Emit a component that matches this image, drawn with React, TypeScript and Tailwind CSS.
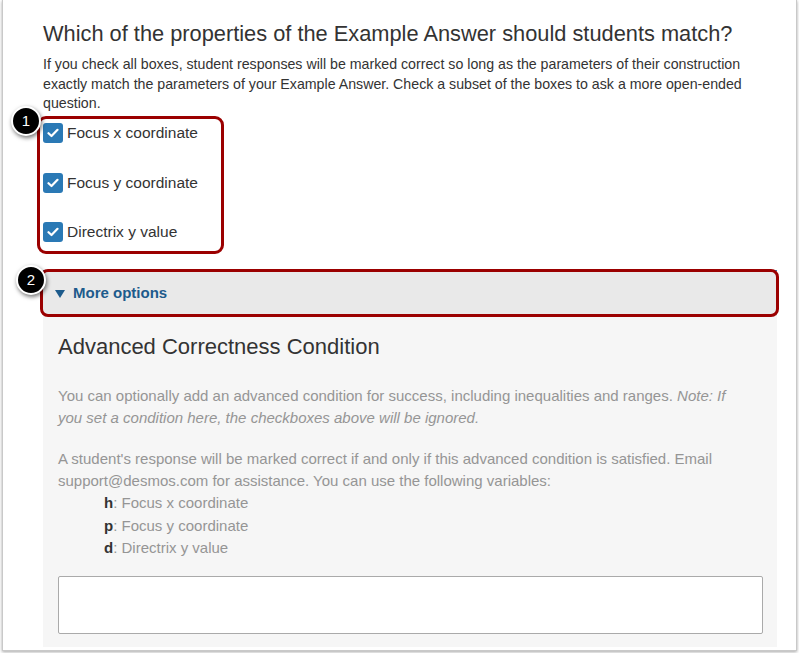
import type { ReactNode } from "react";

const font = { fontFamily: '"Helvetica Neue", "Liberation Sans", Arial, sans-serif' };

function Callout({ n, className }: { n: number; className: string }) {
  return (
    <div
      className={`absolute flex h-[30px] w-[30px] items-center justify-center rounded-full border-2 border-white bg-black text-[15px] text-white shadow-[1px_2px_4px_rgba(0,0,0,0.55)] ${className}`}
    >
      {n}
    </div>
  );
}

function CheckRow({ children }: { children: ReactNode }) {
  return (
    <label className="flex h-[20px] items-center gap-[4px]">
      <span className="flex h-[20px] w-[20px] items-center justify-center rounded-[3px] bg-[#2a79b5]">
        <svg width="12" height="10" viewBox="0 0 12 10" fill="none">
          <path d="M1.5 5.2 4.5 8 10.5 1.8" stroke="white" strokeWidth="2.2" strokeLinecap="round" strokeLinejoin="round" />
        </svg>
      </span>
      <span className="text-[15.5px] text-[#333]">{children}</span>
    </label>
  );
}

function Variable({ name, children }: { name: string; children: ReactNode }) {
  return (
    <div className="h-[22.5px] leading-[22.5px]">
      <b className="font-bold text-[#333]">{name}</b>: {children}
    </div>
  );
}

export default function App() {
  return (
    <div className="h-[653px] w-[799px] overflow-hidden bg-white" style={font}>
      <div className="relative ml-[2px] h-[651px] w-[795px] border-x border-b border-[#c9c9c9] bg-white pl-[40px] pr-[18px] shadow-[0_1px_3px_rgba(0,0,0,0.35)]">
        <h2 className="pt-[20px] text-[21.8px] leading-[28px] text-[#333]">
          Which of the properties of the Example Answer should students match?
        </h2>
        <p className="mt-[7px] text-[14.2px] leading-[19.7px] text-[#333]">
          If you check all boxes, student responses will be marked correct so long as the parameters of their construction
          <br />
          exactly match the parameters of your Example Answer. Check a subset of the boxes to ask a more open-ended
          <br />
          question.
        </p>

        <div className="relative mt-[9px] flex w-[175px] flex-col gap-[29.5px]">
          <CheckRow>Focus x coordinate</CheckRow>
          <CheckRow>Focus y coordinate</CheckRow>
          <CheckRow>Directrix y value</CheckRow>
          <div className="pointer-events-none absolute -left-[6px] -top-[7px] -bottom-[12px] w-[187px] rounded-[9px] border-[3px] border-[#9b0000]" />
        </div>
        <Callout n={1} className="left-[8px] top-[106px]" />

        <div className="relative mt-[28px] w-[734px]">
          <div className="flex h-[46px] items-center gap-[8px] border-t border-[#3a7bb0] bg-[#e9e9e9] pl-[12px]">
            <svg width="10" height="8" viewBox="0 0 10 8">
              <path d="M0 0h10L5 8z" fill="#1d5b8c" />
            </svg>
            <span className="text-[15px] font-bold text-[#1d5b8c]">More options</span>
          </div>
          <div className="pointer-events-none absolute -left-[3px] -right-[2px] -top-[1px] h-[48px] rounded-[8px] border-[3px] border-[#9b0000]" />

          <div className="bg-[#f6f6f6] pb-[13px] pl-[15px] pr-[14px] pt-[17px]">
            <h3 className="text-[22px] leading-[28px] text-[#333]">Advanced Correctness Condition</h3>
            <p className="mt-[24px] text-[15px] leading-[22px] text-[#959595]">
              You can optionally add an advanced condition for success, including inequalities and ranges.{" "}
              <i>Note: If</i>
              <br />
              <i>you set a condition here, the checkboxes above will be ignored.</i>
            </p>
            <div className="mt-[19px] text-[15px] leading-[22px] text-[#959595]">
              <p>
                A student's response will be marked correct if and only if this advanced condition is satisfied. Email
                <br />
                support@desmos.com for assistance. You can use the following variables:
              </p>
              <div className="pl-[46px]">
                <Variable name="h">Focus x coordinate</Variable>
                <Variable name="p">Focus y coordinate</Variable>
                <Variable name="d">Directrix y value</Variable>
              </div>
            </div>
            <textarea className="mt-[16px] block h-[58px] w-[705px] resize-none rounded-[2px] border border-[#aaa] bg-white" />
          </div>
        </div>
        <Callout n={2} className="left-[13px] top-[265px]" />
      </div>
    </div>
  );
}
